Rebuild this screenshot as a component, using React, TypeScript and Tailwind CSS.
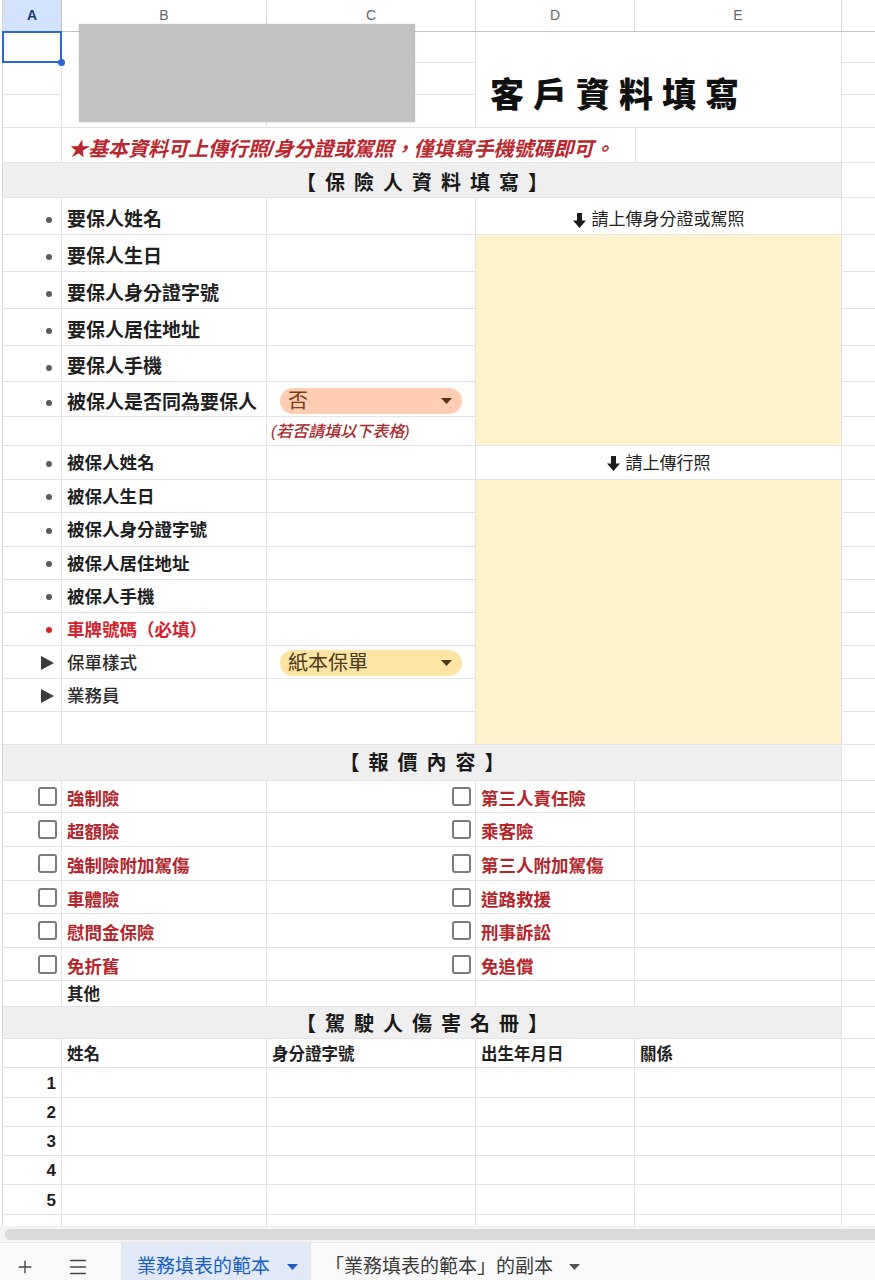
import type { ReactNode } from "react";
import { Menu, Plus } from "lucide-react";

const A = "w-[59px] shrink-0";
const B = "w-[205px] shrink-0";
const C = "w-[209px] shrink-0";
const D = "w-[159px] shrink-0";
const E = "w-[207px] shrink-0";
const F = "flex-1";
const cell = "border-r border-b border-[#e3e3e3]";

type Mark = "dot" | "red" | "tri" | undefined;

const mainRows: {
  h: string;
  mark?: Mark;
  label?: string;
  big?: boolean;
  select?: "no" | "paper";
  note?: boolean;
}[] = [
  { h: "h-[37px]", mark: "dot", label: "要保人姓名", big: true },
  { h: "h-[37px]", mark: "dot", label: "要保人生日", big: true },
  { h: "h-[37px]", mark: "dot", label: "要保人身分證字號", big: true },
  { h: "h-[37px]", mark: "dot", label: "要保人居住地址", big: true },
  { h: "h-[36px]", mark: "dot", label: "要保人手機", big: true },
  { h: "h-[35px]", mark: "dot", label: "被保人是否同為要保人", big: true, select: "no" },
  { h: "h-[29px]", note: true },
  { h: "h-[34px]", mark: "dot", label: "被保人姓名" },
  { h: "h-[33px]", mark: "dot", label: "被保人生日" },
  { h: "h-[34px]", mark: "dot", label: "被保人身分證字號" },
  { h: "h-[33px]", mark: "dot", label: "被保人居住地址" },
  { h: "h-[33px]", mark: "dot", label: "被保人手機" },
  { h: "h-[33px]", mark: "red", label: "車牌號碼（必填）" },
  { h: "h-[33px]", mark: "tri", label: "保單樣式", select: "paper" },
  { h: "h-[33px]", mark: "tri", label: "業務員" },
  { h: "h-[33px]" },
];

const checkRows = [
  { h: "h-[32px]", left: "強制險", right: "第三人責任險" },
  { h: "h-[34px]", left: "超額險", right: "乘客險" },
  { h: "h-[34px]", left: "強制險附加駕傷", right: "第三人附加駕傷" },
  { h: "h-[33px]", left: "車體險", right: "道路救援" },
  { h: "h-[34px]", left: "慰問金保險", right: "刑事訴訟" },
  { h: "h-[33px]", left: "免折舊", right: "免追償" },
];

const tableRows = [
  { h: "h-[30px]", n: "1" },
  { h: "h-[29px]", n: "2" },
  { h: "h-[29px]", n: "3" },
  { h: "h-[29px]", n: "4" },
  { h: "h-[30px]", n: "5" },
];

function Caret({ color }: { color: string }) {
  return (
    <svg width="11" height="6" viewBox="0 0 11 6">
      <path d="M0 0h11L5.5 6z" fill={color} />
    </svg>
  );
}

function MarkIcon({ mark }: { mark: Mark }) {
  if (mark === "dot") return <span className="block w-[6px] h-[6px] rounded-full bg-[#5c5c5c]" />;
  if (mark === "red") return <span className="block w-[6px] h-[6px] rounded-full bg-[#d4242a]" />;
  if (mark === "tri")
    return (
      <svg width="13" height="14" viewBox="0 0 13 14" className="mr-[-2px]">
        <path d="M0 0L13 7L0 14z" fill="#3a3a3a" />
      </svg>
    );
  return null;
}

function DownArrow() {
  return (
    <svg width="13" height="15" viewBox="0 0 13 15" className="mr-[6px]">
      <path d="M4 0h5v7.5h4L6.5 15L0 7.5h4z" fill="#1c1c1c" />
    </svg>
  );
}

function Box() {
  return <span className="block w-[19px] h-[19px] border-2 border-[#7b7b7b] rounded-[3px]" />;
}

function Band({ h, pad, children }: { h: string; pad?: string; children: ReactNode }) {
  return (
    <div className={`flex ${h}`}>
      <div className={`w-[839px] shrink-0 ${cell} bg-[#efefef] flex items-center justify-center ${pad ?? ""}`}>
        <span className="font-bold text-[20px] tracking-[9px] pl-[9px] text-[#1a1a1a]">{children}</span>
      </div>
      <div className={`${F} border-b border-[#e3e3e3]`} />
    </div>
  );
}

function Chip({ kind }: { kind: "no" | "paper" }) {
  const no = kind === "no";
  return (
    <div
      className={`mx-[13px] h-[26px] w-full rounded-full flex items-center justify-between pl-[8px] pr-[10px] ${
        no ? "bg-[#ffcdb3] text-[#7a3a12]" : "bg-[#ffe5a3] text-[#4a3a20]"
      }`}
    >
      <span className="text-[20px] leading-none">{no ? "否" : "紙本保單"}</span>
      <Caret color={no ? "#5b3017" : "#4a3a20"} />
    </div>
  );
}

export default function App() {
  return (
    <div className="relative w-[875px] h-[1280px] overflow-hidden bg-white font-['Liberation_Sans','Noto_Sans_CJK_TC',sans-serif] text-[#1f1f1f]">
      <div className="pl-[2px]">
        <div className="border-l border-[#d6d6d6] flex flex-col">
          {/* column headers */}
          <div className="flex h-[32px] border-b border-[#c4c7c5]">
            <div className={`${A} border-r border-[#c4c7c5] bg-[#d3e3fd] flex items-center justify-center text-[14px] font-bold text-[#1e3a6e]`}>A</div>
            <div className={`${B} border-r border-[#dcdcdc] flex items-center justify-center text-[14px] text-[#666]`}>B</div>
            <div className={`${C} border-r border-[#dcdcdc] flex items-center justify-center text-[14px] text-[#666]`}>C</div>
            <div className={`${D} border-r border-[#dcdcdc] flex items-center justify-center text-[14px] text-[#666]`}>D</div>
            <div className={`${E} border-r border-[#dcdcdc] flex items-center justify-center text-[14px] text-[#666]`}>E</div>
            <div className={F} />
          </div>

          {/* top block */}
          <div className="grid grid-cols-[59px_205px_209px_159px_207px_1fr] grid-rows-[31px_32px_33px_35px]">
            <div className={`col-start-1 row-start-1 ${cell} relative`}>
              <div className="absolute inset-[-1px] border-2 border-[#2767d4]" />
              <div className="absolute right-[-4px] bottom-[-4px] w-[7px] h-[7px] rounded-full bg-[#2767d4]" />
            </div>
            <div className={`col-start-1 row-start-2 ${cell}`} />
            <div className={`col-start-1 row-start-3 ${cell}`} />
            <div className={`col-start-1 row-start-4 ${cell}`} />
            <div className={`col-start-2 row-start-1 row-span-3 ${cell}`} />
            <div className={`col-start-3 row-start-1 ${cell}`} />
            <div className={`col-start-3 row-start-2 ${cell}`} />
            <div className={`col-start-3 row-start-3 ${cell}`} />
            <div className={`col-start-4 col-span-2 row-start-1 row-span-3 ${cell} flex items-center pt-[30px] pl-[14px]`}>
              <span className="font-black text-[34px] tracking-[9px] leading-none text-[#111]">客戶資料填寫</span>
            </div>
            <div className="col-start-6 row-start-1 border-b border-[#e3e3e3]" />
            <div className="col-start-6 row-start-2 border-b border-[#e3e3e3]" />
            <div className="col-start-6 row-start-3 border-b border-[#e3e3e3]" />
            <div className="col-start-6 row-start-4 border-b border-[#e3e3e3]" />
            <div className="col-start-2 col-span-3 row-start-4 border-b border-[#e3e3e3] flex items-center pl-[6px] pt-[8px] whitespace-nowrap">
              <span className="italic font-bold text-[20px] text-[#b8282f]">★基本資料可上傳行照/身分證或駕照，僅填寫手機號碼即可。</span>
            </div>
            <div className={`col-start-5 row-start-4 ${cell} border-l`} />
          </div>

          <Band h="h-[35px]" pad="pt-[6px]">【保險人資料填寫】</Band>

          {/* main block */}
          <div className="flex">
            <div className="flex flex-col">
              {mainRows.map((r, i) => (
                <div key={i} className={`flex ${r.h}`}>
                  <div className={`${A} ${cell} flex items-center justify-end pr-[9px] ${r.big ? "pt-[8px]" : "pt-[2px]"}`}>
                    <MarkIcon mark={r.mark} />
                  </div>
                  <div className={`${B} ${cell} flex items-center pl-[5px] whitespace-nowrap ${r.big ? "pt-[8px]" : "pt-[2px]"}`}>
                    {r.label && (
                      <span
                        className={`${r.big ? "text-[19px]" : "text-[17.5px]"} ${
                          r.mark === "tri" ? "font-medium text-[#2a2a2a]" : "font-bold"
                        } ${r.mark === "red" ? "text-[#d3222a]" : ""}`}
                      >
                        {r.label}
                      </span>
                    )}
                  </div>
                  <div className={`${C} ${cell} flex items-center ${r.big ? "pt-[3px]" : "pt-[1px]"}`}>
                    {r.select && <Chip kind={r.select} />}
                    {r.note && (
                      <span className="pl-[4px] italic font-medium text-[16px] text-[#a82a2e]">(若否請填以下表格)</span>
                    )}
                  </div>
                </div>
              ))}
            </div>
            <div className="w-[366px] shrink-0 flex flex-col">
              <div className={`h-[37px] ${cell} flex items-center justify-center pt-[8px] text-[17px]`}>
                <DownArrow />
                請上傳身分證或駕照
              </div>
              <div className={`h-[211px] ${cell} bg-[#fff2cc]`} />
              <div className={`h-[34px] ${cell} flex items-center justify-center pt-[2px] text-[17px]`}>
                <DownArrow />
                請上傳行照
              </div>
              <div className={`h-[265px] ${cell} bg-[#fff2cc]`} />
            </div>
            <div className={`${F} flex flex-col`}>
              {mainRows.map((r, i) => (
                <div key={i} className={`${r.h} border-b border-[#e3e3e3]`} />
              ))}
            </div>
          </div>

          <Band h="h-[36px]">【報價內容】</Band>

          {/* checkboxes */}
          {checkRows.map((r) => (
            <div key={r.left} className={`flex ${r.h}`}>
              <div className={`${A} ${cell} flex items-center justify-end pr-[4px]`}>
                <Box />
              </div>
              <div className={`${B} ${cell} flex items-center pl-[5px] pt-[6px] text-[17.5px] font-bold text-[#b3262b]`}>{r.left}</div>
              <div className={`${C} ${cell} flex items-center justify-end pr-[4px]`}>
                <Box />
              </div>
              <div className={`${D} ${cell} flex items-center pl-[5px] pt-[6px] text-[17.5px] font-bold text-[#b3262b] whitespace-nowrap`}>{r.right}</div>
              <div className={`${E} ${cell}`} />
              <div className={`${F} border-b border-[#e3e3e3]`} />
            </div>
          ))}
          <div className="flex h-[26px]">
            <div className={`${A} ${cell}`} />
            <div className={`${B} ${cell} flex items-center pl-[5px] pt-[1px] text-[16.5px] font-bold`}>其他</div>
            <div className={`${C} ${cell}`} />
            <div className={`${D} ${cell}`} />
            <div className={`${E} ${cell}`} />
            <div className={`${F} border-b border-[#e3e3e3]`} />
          </div>

          <Band h="h-[32px]" pad="pt-[2px]">【駕駛人傷害名冊】</Band>

          {/* driver table */}
          <div className="flex h-[29px] text-[16.5px] font-bold">
            <div className={`${A} ${cell}`} />
            <div className={`${B} ${cell} flex items-center pl-[5px] pt-[3px]`}>姓名</div>
            <div className={`${C} ${cell} flex items-center pl-[5px] pt-[3px]`}>身分證字號</div>
            <div className={`${D} ${cell} flex items-center pl-[5px] pt-[3px]`}>出生年月日</div>
            <div className={`${E} ${cell} flex items-center pl-[5px] pt-[3px]`}>關係</div>
            <div className={`${F} border-b border-[#e3e3e3]`} />
          </div>
          {tableRows.map((r) => (
            <div key={r.n} className={`flex ${r.h}`}>
              <div className={`${A} ${cell} flex items-center justify-end pr-[5px] pt-[2px] text-[17px] font-bold`}>{r.n}</div>
              <div className={`${B} ${cell}`} />
              <div className={`${C} ${cell}`} />
              <div className={`${D} ${cell}`} />
              <div className={`${E} ${cell}`} />
              <div className={`${F} border-b border-[#e3e3e3]`} />
            </div>
          ))}
          <div className="flex h-[11px]">
            <div className={`${A} border-r border-[#e3e3e3]`} />
            <div className={`${B} border-r border-[#e3e3e3]`} />
            <div className={`${C} border-r border-[#e3e3e3]`} />
            <div className={`${D} border-r border-[#e3e3e3]`} />
            <div className={`${E} border-r border-[#e3e3e3]`} />
            <div className={F} />
          </div>
        </div>
      </div>

      {/* scrollbar */}
      <div className="h-[16px] bg-[#f3f3f3] flex items-center pl-[5px]">
        <div className="h-[11px] w-full rounded-l-full bg-[#d9d9d9]" />
      </div>

      {/* sheet tabs */}
      <div className="h-[38px] flex items-stretch bg-[#f9f9f9] border-t border-[#e6e6e6]">
        <div className="w-[50px] flex items-center justify-center pt-[10px] text-[#444]">
          <Plus size={20} strokeWidth={1.6} />
        </div>
        <div className="w-[56px] flex items-center justify-center pt-[10px] text-[#444]">
          <Menu size={22} strokeWidth={1.6} />
        </div>
        <div className="ml-[15px] w-[190px] bg-[#e1e9f7] flex items-center pl-[16px] gap-[17px] pt-[11px] text-[19px] text-[#1b5ec6]">
          <span>業務填表的範本</span>
          <Caret color="#1b5ec6" />
        </div>
        <div className="flex items-center pl-[14px] gap-[16px] pt-[11px] text-[19px] text-[#3c3c3c]">
          <span>「業務填表的範本」的副本</span>
          <Caret color="#555" />
        </div>
      </div>

      {/* floating picture */}
      <div className="absolute left-[79px] top-[24px] w-[336px] h-[98px] bg-[#c1c1c1] shadow-[0_0_2px_rgba(0,0,0,0.15)]" />
    </div>
  );
}
